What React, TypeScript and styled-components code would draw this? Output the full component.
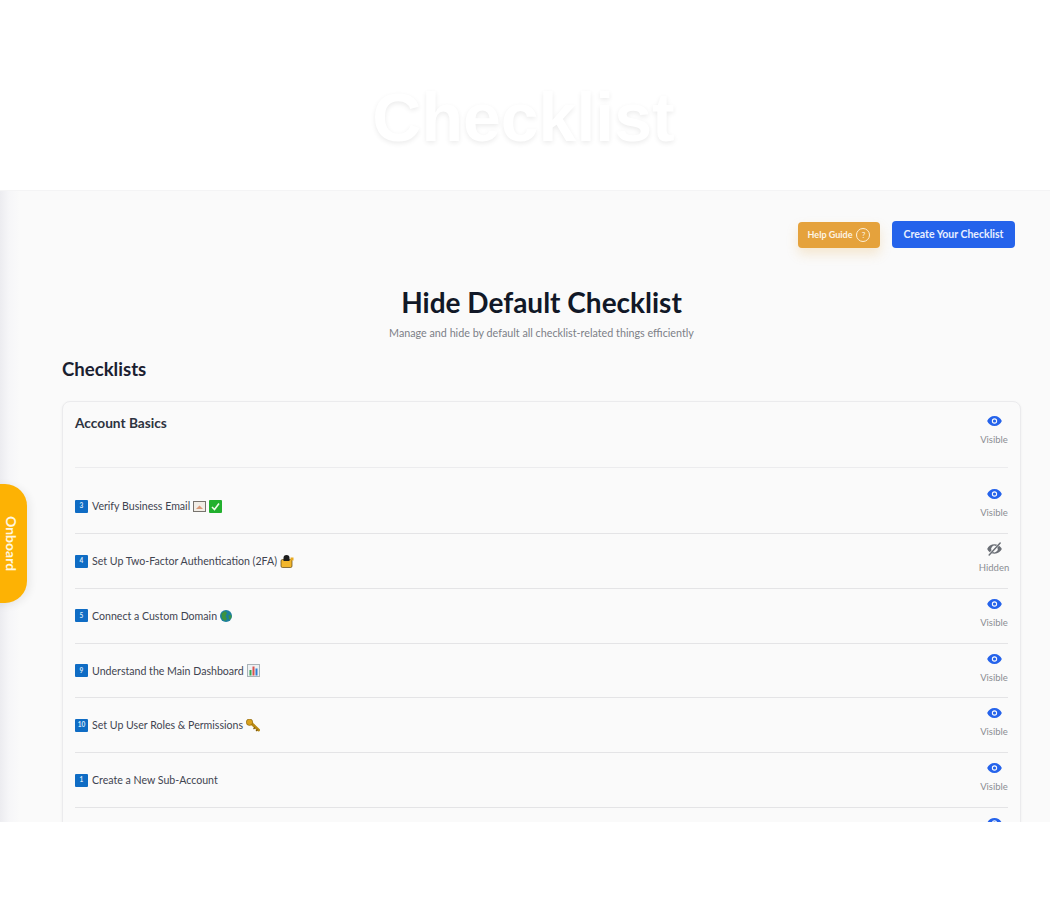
import React from 'react';
import styled, { createGlobalStyle } from 'styled-components';

const GlobalStyle = createGlobalStyle`
  html, body {
    margin: 0;
    padding: 0;
    background: #ffffff;
    font-family: "Lato", "Open Sans", sans-serif;
  }
`;

const Page = styled.div`
  position: relative;
  width: 1050px;
  height: 900px;
  overflow: hidden;
  background: #ffffff;
`;

const Hero = styled.header`
  height: 190px;
  box-sizing: border-box;
  display: flex;
  justify-content: center;
  padding-top: 78px;
  background: #ffffff;
`;

const HeroTitle = styled.div`
  font-family: "Liberation Sans", sans-serif;
  font-size: 68px;
  line-height: 78px;
  font-weight: 700;
  color: #ffffff;
  text-shadow: 0 2px 5px rgba(0, 0, 0, 0.08);
  margin-left: -3px;
`;

const Body = styled.div`
  height: 632px;
  display: flex;
  overflow: hidden;
  background: #fafafa;
  border-top: 1px solid #f4f4f5;
  box-sizing: border-box;
`;

const SideShade = styled.div`
  width: 20px;
  flex-shrink: 0;
  background: linear-gradient(90deg, #ececf0 0%, #f6f6f8 45%, #fafafa 100%);
`;

const Main = styled.main`
  flex: 1;
  min-width: 0;
  padding: 30px 29px 0 42px;
`;

const Actions = styled.div`
  display: flex;
  justify-content: flex-end;
  align-items: center;
  gap: 12px;
  padding-right: 6px;
`;

const HelpButton = styled.button`
  height: 26px;
  width: 82px;
  padding: 0;
  display: flex;
  align-items: center;
  justify-content: center;
  gap: 4px;
  border: none;
  border-radius: 4px;
  background: #e5a23c;
  color: #fdf5e6;
  font: 700 9px "Lato", sans-serif;
  box-shadow: 0 6px 12px rgba(229, 162, 60, 0.22);
`;

const HelpIcon = styled.span`
  width: 12px;
  height: 12px;
  display: inline-flex;
  align-items: center;
  justify-content: center;
  border: 1px solid #fdf0d8;
  border-radius: 50%;
  font-size: 8px;
  font-weight: 400;
`;

const CreateButton = styled.button`
  height: 27px;
  width: 123px;
  padding: 0 0 2px;
  border: none;
  border-radius: 4px;
  background: #2563eb;
  color: #e8efff;
  font: 700 10.5px "Lato", sans-serif;
`;

const Heading = styled.h1`
  margin: 36px 0 0;
  text-align: center;
  color: #111827;
  font-size: 28px;
  line-height: 36px;
  font-weight: 700;
`;

const Subheading = styled.p`
  margin: 6px 0 0;
  text-align: center;
  color: #7c7f87;
  font-size: 10.75px;
  line-height: 14px;
`;

const SectionTitle = styled.h2`
  margin: 17px 0 0;
  color: #1a2030;
  font-size: 18.6px;
  line-height: 24px;
  font-weight: 700;
`;

const Card = styled.section`
  margin-top: 20px;
  padding: 0 12px;
  background: #fafafa;
  border: 1px solid #ebebed;
  border-radius: 8px;
  box-shadow: 0 1px 3px rgba(0, 0, 0, 0.05);
`;

const CardHeader = styled.div`
  height: 66px;
  box-sizing: border-box;
  padding-top: 11px;
  display: flex;
  justify-content: space-between;
  align-items: flex-start;
  border-bottom: 1px solid #ececee;
`;

const CardTitle = styled.div`
  color: #2d3340;
  font-size: 13.7px;
  line-height: 20px;
  font-weight: 700;
`;

const Row = styled.div<{ $first?: boolean }>`
  height: ${(p) => (p.$first ? 66 : 54.8)}px;
  box-sizing: border-box;
  padding-top: ${(p) => (p.$first ? 18 : 7)}px;
  display: flex;
  justify-content: space-between;
  align-items: flex-start;
  border-bottom: 1px solid #e4e4e6;
`;

const RowLabel = styled.div`
  margin-top: 13px;
  display: flex;
  align-items: center;
  gap: 3px;
  color: #3f4450;
  font-size: 10.6px;
  line-height: 14px;
`;

const KeyCap = styled.span`
  width: 13px;
  height: 13px;
  display: inline-flex;
  align-items: center;
  justify-content: center;
  margin-right: 1px;
  border-radius: 1px;
  background: #0f6cc4;
  color: #d7e9fa;
  font-size: 6.5px;
  font-weight: 700;
`;

const Toggle = styled.div<{ $hidden?: boolean }>`
  width: 28px;
  display: flex;
  flex-direction: column;
  align-items: center;
  gap: 5px;
  color: ${(p) => (p.$hidden ? '#6b6f76' : '#2563eb')};
`;

const ToggleText = styled.span`
  color: #8a8d93;
  font-size: 9.5px;
  line-height: 12px;
`;

const OnboardTab = styled.div`
  position: absolute;
  left: -10px;
  top: 484px;
  width: 37px;
  height: 119px;
  display: flex;
  align-items: center;
  justify-content: center;
  padding-left: 6px;
  box-sizing: border-box;
  border-radius: 0 22px 22px 0;
  background: #fdb204;
  color: #fff7e0;
  box-shadow: 3px 2px 8px rgba(0, 0, 0, 0.07);
`;

const OnboardText = styled.span`
  writing-mode: vertical-rl;
  font-size: 14px;
  font-weight: 700;
`;

const EyeOpen = () => (
  <svg width="17" height="16" viewBox="0 0 24 24" fill="currentColor">
    <path d="M12 4.500C7 4.500 2.700 7.600 1 12c1.700 4.400 6 7.500 11 7.500s9.300-3.100 11-7.500c-1.700-4.400-6-7.500-11-7.500zm0 11.500a4 4 0 1 1 0-8 4 4 0 0 1 0 8zm0-6.400a2.400 2.400 0 1 0 0 4.800 2.400 2.400 0 0 0 0-4.800z" />
  </svg>
);

const EyeOff = () => (
  <svg width="17" height="16" viewBox="0 0 24 24" fill="currentColor">
    <path d="M12 5C7 5 2.700 8 1 12c.8 1.900 2.200 3.600 3.900 4.800l2.600-2.600A5 5 0 0 1 14.200 7.500l2-2A12 12 0 0 0 12 5zm6.900 2.200-2.600 2.600a5 5 0 0 1-6.700 6.700l-2 2c1.400.4 2.900.5 4.400.5 5 0 9.300-3 11-7-.8-1.900-2.300-3.600-4.100-4.800z" />
    <path d="M4 21 20.500 3" stroke="currentColor" strokeWidth="2.200" strokeLinecap="round" />
  </svg>
);

const MailIcon = () => (
  <svg width="13" height="11" viewBox="0 0 13 11">
    <rect x="0.500" y="0.500" width="12" height="10" fill="#f1ede6" stroke="#77736d" />
    <path d="M3 8 6.500 4.500 10 8z" fill="#d99a78" />
  </svg>
);

const CheckIcon = () => (
  <svg width="13" height="13" viewBox="0 0 13 13">
    <rect width="13" height="13" rx="1" fill="#22b02e" />
    <path d="M3 7l2.500 2.500L10 3.500" fill="none" stroke="#eefbe9" strokeWidth="1.600" />
  </svg>
);

const LockIcon = () => (
  <svg width="14" height="13" viewBox="0 0 14 13">
    <rect x="1" y="4.500" width="11" height="8" rx="1.500" fill="#f1b62c" stroke="#5c4310" strokeWidth="0.700" />
    <path d="M3.500 6V3a3 3 0 0 1 6 0v3z" fill="#1c1c1c" />
    <path d="M10.500 2.500h3v3h-3z" fill="#e8a91f" />
  </svg>
);

const GlobeIcon = () => (
  <svg width="12" height="12" viewBox="0 0 12 12">
    <circle cx="6" cy="6" r="6" fill="#1d7f9c" />
    <path d="M1.500 3.500 5 1l2 2-1.500 3L7 9 5 11 2 8.500zM8.500 5l3 .5-.5 3-2 1z" fill="#3d9440" />
  </svg>
);

const ChartIcon = () => (
  <svg width="13" height="13" viewBox="0 0 13 13">
    <rect x="0.500" y="0.500" width="12" height="12" fill="#eef1f3" stroke="#a9b3b8" />
    <rect x="2.500" y="6" width="2" height="5.500" fill="#3aa655" />
    <rect x="5.500" y="2.500" width="2" height="9" fill="#d9534f" />
    <rect x="8.500" y="4.500" width="2" height="7" fill="#2f7fd1" />
  </svg>
);

const KeyIcon = () => (
  <svg width="14" height="13" viewBox="0 0 14 13">
    <path d="M4.500 3.500 12.500 11" stroke="#b98a14" strokeWidth="3" strokeLinecap="round" />
    <circle cx="3.500" cy="3.200" r="3.200" fill="#d9a21f" stroke="#7d5a0c" strokeWidth="0.600" />
    <path d="M9 8.500 7.500 10M11.500 10.500 10 12" stroke="#7d5a0c" strokeWidth="1.200" />
  </svg>
);

const items = [
  { num: '3', title: 'Verify Business Email', icons: [<MailIcon key="m" />, <CheckIcon key="c" />] },
  { num: '4', title: 'Set Up Two-Factor Authentication (2FA)', icons: [<LockIcon key="l" />], hidden: true },
  { num: '5', title: 'Connect a Custom Domain', icons: [<GlobeIcon key="g" />] },
  { num: '9', title: 'Understand the Main Dashboard', icons: [<ChartIcon key="d" />] },
  { num: '10', title: 'Set Up User Roles & Permissions', icons: [<KeyIcon key="k" />] },
  { num: '1', title: 'Create a New Sub-Account', icons: [] },
];

const VisibilityToggle: React.FC<{ hidden?: boolean }> = ({ hidden }) => (
  <Toggle $hidden={hidden}>
    {hidden ? <EyeOff /> : <EyeOpen />}
    <ToggleText>{hidden ? 'Hidden' : 'Visible'}</ToggleText>
  </Toggle>
);

const App: React.FC = () => {
  return (
    <Page>
      <GlobalStyle />
      <Hero>
        <HeroTitle>Checklist</HeroTitle>
      </Hero>
      <Body>
        <SideShade />
        <Main>
          <Actions>
            <HelpButton>
              Help Guide <HelpIcon>?</HelpIcon>
            </HelpButton>
            <CreateButton>Create Your Checklist</CreateButton>
          </Actions>
          <Heading>Hide Default Checklist</Heading>
          <Subheading>Manage and hide by default all checklist-related things efficiently</Subheading>
          <SectionTitle>Checklists</SectionTitle>
          <Card>
            <CardHeader>
              <CardTitle>Account Basics</CardTitle>
              <VisibilityToggle />
            </CardHeader>
            {items.map((item, i) => (
              <Row key={item.num} $first={i === 0}>
                <RowLabel>
                  <KeyCap>{item.num}</KeyCap>
                  {item.title} {item.icons}
                </RowLabel>
                <VisibilityToggle hidden={item.hidden} />
              </Row>
            ))}
            <Row>
              <RowLabel />
              <Toggle>
                <EyeOpen />
              </Toggle>
            </Row>
          </Card>
        </Main>
      </Body>
      <OnboardTab>
        <OnboardText>Onboard</OnboardText>
      </OnboardTab>
    </Page>
  );
};

export default App;
